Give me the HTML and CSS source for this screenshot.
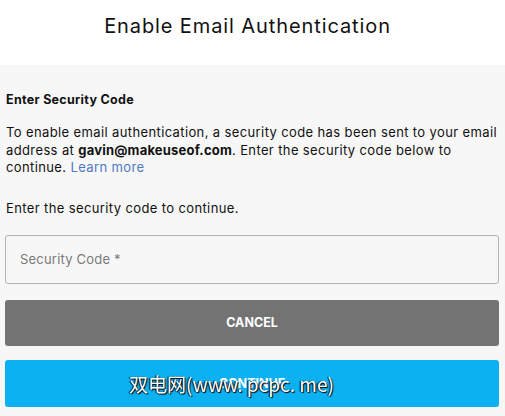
FILE: index.html
```html
<!DOCTYPE html>
<html>
<head>
<meta charset="utf-8">
<link rel="stylesheet" href="styles.css">
</head>
<body>
<div class="page">
  <header class="header">
    <h1 class="title">Enable Email Authentication</h1>
  </header>
  <main class="panel">
    <h2 class="subtitle">Enter Security Code</h2>
    <p class="desc">To enable email authentication, a security code has been sent to your email address at <b>gavin@makeuseof.com</b>. Enter the security code below to continue. <a class="link" href="#">Learn more</a></p>
    <p class="hint">Enter the security code to continue.</p>
    <div class="field"><span class="placeholder">Security Code *</span></div>
    <div class="btn btn-cancel">CANCEL</div>
    <div class="btn btn-continue">CONTINUE</div>
  </main>
  <div class="watermark">双电网(www. pcpc. me)</div>
</div>
</body>
</html>
```
FILE: styles.css
```css
* { box-sizing: border-box; }
html, body { margin: 0; padding: 0; }
body {
  width: 505px;
  height: 416px;
  overflow: hidden;
  font-family: Inter, "Noto Sans", sans-serif;
  color: #111;
  background: #f7f7f7;
}
.page { position: relative; height: 416px; display: flex; flex-direction: column; }
.header {
  background: #fff;
  height: 65px;
  display: flex;
  justify-content: center;
  padding-top: 13px;
  padding-right: 10px;
}
.title {
  margin: 0;
  font-size: 20px;
  font-weight: 400;
  letter-spacing: 0.9px;
  line-height: 26px;
  color: #111;
}
.panel {
  flex: 1;
  background: #f7f7f7;
  padding: 26px 6px 0 5px;
  display: flex;
  flex-direction: column;
}
.subtitle {
  margin: 0 0 0 1px;
  font-size: 12.5px;
  font-weight: 700;
  line-height: 18px;
  letter-spacing: 0.3px;
}
.desc {
  margin: 15px 0 0 1px;
  font-size: 13px;
  line-height: 17.5px;
  letter-spacing: 0.38px;
}
.desc b { font-weight: 700; letter-spacing: 0.2px; }
.link { color: #4f78c4; text-decoration: none; }
.hint {
  margin: 22px 0 0 1px;
  font-size: 13px;
  line-height: 18px;
  letter-spacing: 0.38px;
}
.field {
  margin-top: 18px;
  height: 49px;
  border: 1px solid #b4b4b4;
  border-radius: 3px;
  display: flex;
  align-items: center;
  padding-left: 14px;
}
.placeholder { color: #7a7a7a; font-size: 13px; letter-spacing: 0.2px; }
.btn {
  display: flex;
  align-items: center;
  justify-content: center;
  color: #fff;
  font-weight: 700;
  font-size: 12.5px;
  border-radius: 3px;
}
.btn-cancel { margin-top: 16px; height: 46px; background: #737373; }
.btn-continue { margin-top: 14px; height: 47px; background: #0cb1f1; }
.watermark {
  position: absolute;
  left: 129px;
  top: 370px;
  font-family: "Noto Sans CJK SC", sans-serif;
  font-size: 19px;
  color: #fff;
  text-shadow: 1px 1px 1px #000, -1px 0 1px #000;
}
```
